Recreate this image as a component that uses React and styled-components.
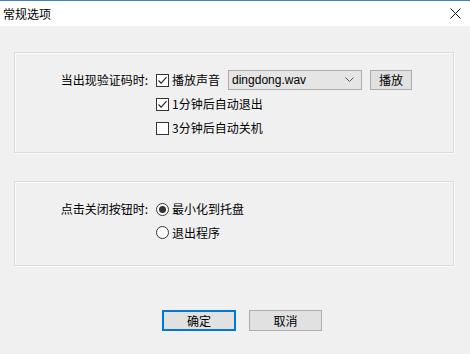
import React, { useState } from "react";
import styled, { createGlobalStyle } from "styled-components";

const Global = createGlobalStyle`
  html, body { margin: 0; padding: 0; }
  body {
    background: #f0f0f0;
    font-family: "Noto Sans CJK SC", "Microsoft YaHei", sans-serif;
    font-size: 12px;
    color: #000;
  }
`;

const Window = styled.div`
  width: 470px;
  height: 354px;
  background: #f0f0f0;
  display: flex;
  flex-direction: column;
  overflow: hidden;
`;

const TitleBar = styled.div`
  height: 25px;
  background: #fff;
  border-top: 1px solid #3a82c7;
  display: flex;
  align-items: center;
  justify-content: space-between;
  padding: 0 9px 0 3px;
`;

const Title = styled.span`
  font-size: 12px;
  line-height: 14px;
  color: #000;
`;

const Body = styled.div`
  flex: 1;
  display: flex;
  flex-direction: column;
  padding: 26px 16px 0 14px;
`;

const Group = styled.div`
  border: 1px solid #dadada;
  box-shadow: inset 1px 1px 0 #fafafa, 1px 1px 0 #fafafa;
  display: grid;
  grid-template-columns: 133px auto;
  column-gap: 8px;
  align-content: start;
  height: ${(p) => p.$h}px;
  box-sizing: border-box;
  padding-top: 15px;
  margin-top: ${(p) => p.$mt || 0}px;
`;

const FieldLabel = styled.div`
  text-align: right;
  height: ${(p) => p.$rh}px;
  line-height: ${(p) => p.$rh}px;
  white-space: nowrap;
`;

const Options = styled.div`
  display: flex;
  flex-direction: column;
`;

const Row = styled.div`
  height: ${(p) => p.$rh}px;
  display: flex;
  align-items: center;
`;

const Check = styled.span`
  width: 13px;
  height: 13px;
  box-sizing: border-box;
  border: 1px solid #333;
  background: #fff;
  display: inline-flex;
  align-items: center;
  justify-content: center;
  flex: none;
  margin-right: 3px;
`;

const Radio = styled.span`
  width: 13px;
  height: 13px;
  box-sizing: border-box;
  border: 1px solid #333;
  border-radius: 50%;
  background: #fff;
  display: inline-flex;
  align-items: center;
  justify-content: center;
  flex: none;
  margin-right: 3px;
  &::after {
    content: "";
    width: 7px;
    height: 7px;
    border-radius: 50%;
    background: ${(p) => (p.$on ? "#333" : "transparent")};
  }
`;

const OptText = styled.span`
  line-height: 14px;
  white-space: nowrap;
`;

const Select = styled.div`
  width: 134px;
  height: 20px;
  box-sizing: border-box;
  border: 1px solid #acacac;
  background: #e5e5e5;
  margin-left: 8px;
  display: flex;
  align-items: center;
  justify-content: space-between;
  padding: 0 7px 0 3px;
  font-family: "Liberation Sans", Arial, sans-serif;
  font-size: 12px;
  color: #000;
`;

const SmallButton = styled.div`
  width: 42px;
  height: 20px;
  box-sizing: border-box;
  border: 1px solid #adadad;
  background: #e1e1e1;
  margin-left: 8px;
  display: flex;
  align-items: center;
  justify-content: center;
  line-height: 14px;
`;

const Footer = styled.div`
  display: flex;
  justify-content: flex-start;
  gap: 13px;
  margin-top: 44px;
  padding-left: 148px;
`;

const DlgButton = styled.div`
  width: ${(p) => p.$w}px;
  height: 21px;
  box-sizing: border-box;
  border: ${(p) => (p.$primary ? "2px solid #0078d7" : "1px solid #adadad")};
  background: #e1e1e1;
  display: flex;
  align-items: center;
  justify-content: center;
  line-height: 14px;
`;

const CheckMark = () => (
  <svg width="11" height="11" viewBox="0 0 11 11">
    <path d="M1.5 5.5 L4.2 8.2 L9.5 2.2" fill="none" stroke="#222" strokeWidth="1.1" />
  </svg>
);

const Chevron = () => (
  <svg width="9" height="6" viewBox="0 0 9 6">
    <path d="M0.5 0.5 L4.5 4.5 L8.5 0.5" fill="none" stroke="#555" strokeWidth="1" />
  </svg>
);

const CloseIcon = () => (
  <svg width="11" height="11" viewBox="0 0 11 11">
    <path d="M0.5 0.5 L10.5 10.5 M10.5 0.5 L0.5 10.5" fill="none" stroke="#111" strokeWidth="1" />
  </svg>
);

export default function App() {
  const [sound, setSound] = useState(true);
  const [exit1, setExit1] = useState(true);
  const [shut3, setShut3] = useState(false);
  const [closeMode, setCloseMode] = useState("tray");

  return (
    <>
      <Global />
      <Window>
        <TitleBar>
          <Title>常规选项</Title>
          <CloseIcon />
        </TitleBar>
        <Body>
          <Group $h={101}>
            <FieldLabel $rh={24}>当出现验证码时:</FieldLabel>
            <Options>
              <Row $rh={24}>
                <Check onClick={() => setSound(!sound)}>{sound && <CheckMark />}</Check>
                <OptText>播放声音</OptText>
                <Select>
                  <span>dingdong.wav</span>
                  <Chevron />
                </Select>
                <SmallButton>播放</SmallButton>
              </Row>
              <Row $rh={24}>
                <Check onClick={() => setExit1(!exit1)}>{exit1 && <CheckMark />}</Check>
                <OptText>1分钟后自动退出</OptText>
              </Row>
              <Row $rh={24}>
                <Check onClick={() => setShut3(!shut3)}>{shut3 && <CheckMark />}</Check>
                <OptText>3分钟后自动关机</OptText>
              </Row>
            </Options>
          </Group>
          <Group $h={85} $mt={28}>
            <FieldLabel $rh={24}>点击关闭按钮时:</FieldLabel>
            <Options>
              <Row $rh={24}>
                <Radio $on={closeMode === "tray"} onClick={() => setCloseMode("tray")} />
                <OptText>最小化到托盘</OptText>
              </Row>
              <Row $rh={23}>
                <Radio $on={closeMode === "exit"} onClick={() => setCloseMode("exit")} />
                <OptText>退出程序</OptText>
              </Row>
            </Options>
          </Group>
          <Footer>
            <DlgButton $primary $w={74}>确定</DlgButton>
            <DlgButton $w={73}>取消</DlgButton>
          </Footer>
        </Body>
      </Window>
    </>
  );
}
